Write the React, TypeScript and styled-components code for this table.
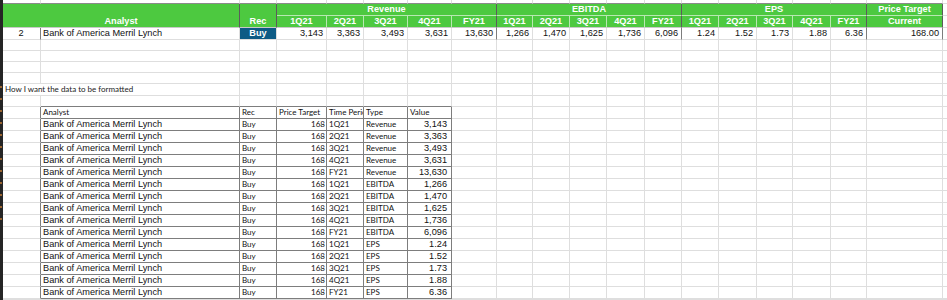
import React from 'react'
import styled, { createGlobalStyle } from 'styled-components'

const GRID = '#dedede'
const DARK = '#7d7d7d'
const SECTION = '#5c5c5c'
const GREEN = '#4dc940'
const SUBLINE = '#b9e8b2'
const BLUE = '#0d5b85'

const COLS = [38, 199, 37, 50, 37, 44, 44, 45, 36, 37, 37, 38, 37, 37, 38, 36, 38, 36, 76, 4]
const ROWS = [4, 12, 12, 12, 11, 11, 11, 11, 12, 11, 12, ...Array(15).fill(12), 1]

const QUARTERS = ['1Q21', '2Q21', '3Q21', '4Q21', 'FY21']

const summary = {
  row: 2,
  analyst: 'Bank of America Merril Lynch',
  rec: 'Buy',
  revenue: ['3,143', '3,363', '3,493', '3,631', '13,630'],
  ebitda: ['1,266', '1,470', '1,625', '1,736', '6,096'],
  eps: ['1.24', '1.52', '1.73', '1.88', '6.36'],
  target: '168.00',
}

const longRows = [
  ...summary.revenue.map((v, i) => ({ period: QUARTERS[i], type: 'Revenue', value: v })),
  ...summary.ebitda.map((v, i) => ({ period: QUARTERS[i], type: 'EBITDA', value: v })),
  ...summary.eps.map((v, i) => ({ period: QUARTERS[i], type: 'EPS', value: v })),
]

const GlobalStyle = createGlobalStyle`
  html, body {
    margin: 0;
    padding: 0;
    background: #fff;
  }
  body {
    font-family: "Liberation Sans", Arial, sans-serif;
    overflow: hidden;
  }
`

const Page = styled.div`
  display: flex;
  width: 947px;
  height: 300px;
  overflow: hidden;
`

const Strip = styled.div`
  width: 3px;
  background: #252525;
  display: flex;
  flex-direction: column;
  padding-top: 86px;
  gap: 10px;
`

const Mark = styled.span`
  display: block;
  width: 2px;
  height: 2px;
  background: #9a6430;
`

const Sheet = styled.div`
  display: grid;
  grid-template-columns: ${COLS.map(c => `${c}px`).join(' ')};
  grid-template-rows: ${ROWS.map(r => `${r}px`).join(' ')};
  width: 944px;
  height: 300px;
`

interface CellProps {
  $span?: number
  $rows?: number
  $r?: string
  $b?: string
  $align?: 'left' | 'center' | 'right'
}

const Cell = styled.div<CellProps>`
  box-sizing: border-box;
  grid-column: span ${p => p.$span ?? 1};
  grid-row: span ${p => p.$rows ?? 1};
  border-right: 1px solid ${p => p.$r ?? GRID};
  border-bottom: 1px solid ${p => p.$b ?? GRID};
  background: #fff;
  display: flex;
  align-items: flex-end;
  justify-content: ${p => (p.$align === 'right' ? 'flex-end' : p.$align === 'center' ? 'center' : 'flex-start')};
  padding: 0 3px 0 2px;
  overflow: hidden;
  white-space: nowrap;
  font-size: 9.2px;
  line-height: 11px;
  color: #111;
`

const HeadCell = styled(Cell)`
  background: ${GREEN};
  color: #fff;
  font-weight: bold;
  justify-content: center;
  align-items: center;
  padding: 0;
`

const TitleCell = styled(HeadCell)`
  align-items: flex-end;
  padding-bottom: 0;
`

const BuyCell = styled(Cell)`
  background: ${BLUE};
  color: #fff;
  font-weight: bold;
  justify-content: center;
  padding: 0;
`

const NoteCell = styled(Cell)`
  font-family: Lato, "Open Sans", sans-serif;
  font-size: 8px;
  padding-left: 2px;
  align-items: center;
  color: #222;
`

const TableCell = styled(Cell)<{ $small?: boolean }>`
  border-right-color: ${DARK};
  border-bottom-color: ${DARK};
  font-family: ${p => (p.$small ? 'Lato, "Open Sans", sans-serif' : '"Liberation Sans", Arial, sans-serif')};
  font-size: ${p => (p.$small ? '8px' : '9.2px')};
  padding: ${p => (p.$small ? '0 1px 0 2px' : '0 4px 0 2px')};
  align-items: ${p => (p.$small ? 'center' : 'flex-end')};
`

const blanks = (n: number, key: string, props: CellProps = {}) =>
  Array.from({ length: n }, (_, i) => <Cell key={`${key}-${i}`} {...props} />)

const Group: React.FC<{ label: string }> = ({ label }) => (
  <HeadCell $span={5} $r={SECTION} $b={SUBLINE}>
    {label}
  </HeadCell>
)

const SubHeads: React.FC<{ id: string }> = ({ id }) => (
  <>
    {QUARTERS.map((q, i) => (
      <HeadCell key={`${id}-${q}`} $r={i === 4 ? SECTION : SUBLINE} $b="#c9c9c9">
        {q}
      </HeadCell>
    ))}
  </>
)

const Values: React.FC<{ id: string; values: string[] }> = ({ id, values }) => (
  <>
    {values.map((v, i) => (
      <Cell key={`${id}-${i}`} $align="right" $r={i === 4 ? DARK : GRID}>
        {v}
      </Cell>
    ))}
  </>
)

const App: React.FC = () => {
  return (
    <Page>
      <GlobalStyle />
      <Strip>
        {Array.from({ length: 12 }, (_, i) => (
          <Mark key={i} />
        ))}
      </Strip>
      <Sheet>
        {/* top border row */}
        {blanks(19, 'r0', { $b: '#8a8a8a' })}
        <Cell />

        {/* green header */}
        <TitleCell $span={2} $rows={2} $r={SECTION} $b="#c9c9c9">
          Analyst
        </TitleCell>
        <TitleCell $rows={2} $r={SECTION} $b="#c9c9c9">
          Rec
        </TitleCell>
        <Group label="Revenue" />
        <Group label="EBITDA" />
        <Group label="EPS" />
        <HeadCell $r={SECTION} $b={SUBLINE}>
          Price Target
        </HeadCell>
        <Cell />

        <SubHeads id="rev" />
        <SubHeads id="ebitda" />
        <SubHeads id="eps" />
        <HeadCell $r={SECTION} $b="#c9c9c9">
          Current
        </HeadCell>
        <Cell />

        {/* summary data row */}
        <Cell $align="center" $r={DARK}>
          {summary.row}
        </Cell>
        <Cell>{summary.analyst}</Cell>
        <BuyCell>{summary.rec}</BuyCell>
        <Values id="rev" values={summary.revenue} />
        <Values id="ebitda" values={summary.ebitda} />
        <Values id="eps" values={summary.eps} />
        <Cell $align="right" $r={DARK}>
          {summary.target}
        </Cell>
        <Cell />

        {blanks(80, 'empty')}

        <NoteCell $span={2}>How I want the data to be formatted</NoteCell>
        {blanks(18, 'note')}

        <Cell />
        {blanks(6, 'tabletop', { $b: DARK })}
        {blanks(13, 'r9')}

        {/* long format table */}
        <Cell $r={DARK} />
        <TableCell $small>Analyst</TableCell>
        <TableCell $small>Rec</TableCell>
        <TableCell $small>Price Target</TableCell>
        <TableCell $small>Time Period</TableCell>
        <TableCell $small>Type</TableCell>
        <TableCell $small>Value</TableCell>
        {blanks(13, 'th')}

        {longRows.map((row, i) => (
          <React.Fragment key={i}>
            <Cell $r={DARK} />
            <TableCell>{summary.analyst}</TableCell>
            <TableCell $small>{summary.rec}</TableCell>
            <TableCell $small $align="right">
              168
            </TableCell>
            <TableCell $small>{row.period}</TableCell>
            <TableCell $small>{row.type}</TableCell>
            <TableCell $align="right">{row.value}</TableCell>
            {blanks(13, `tr${i}`)}
          </React.Fragment>
        ))}

        {blanks(20, 'last')}
      </Sheet>
    </Page>
  )
}

export default App
